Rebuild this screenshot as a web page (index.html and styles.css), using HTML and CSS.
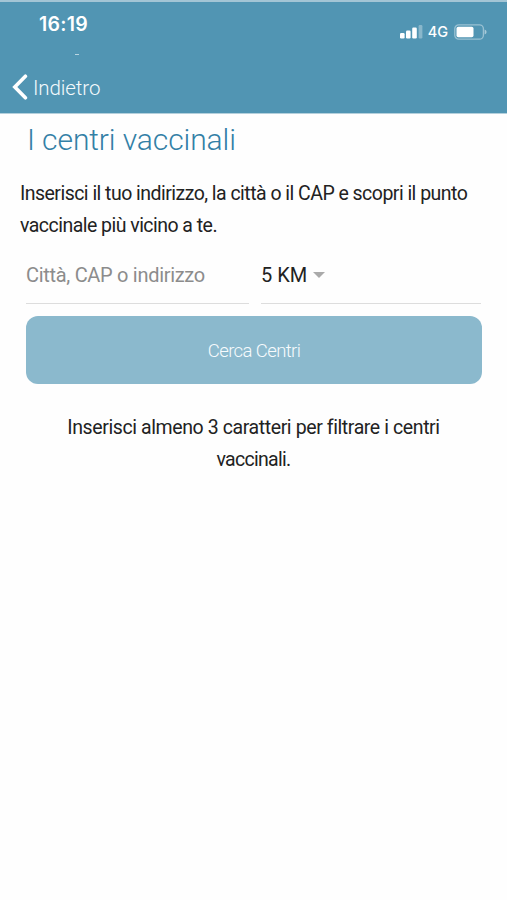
FILE: index.html
```html
<!DOCTYPE html>
<html lang="it">
<head>
<meta charset="utf-8">
<meta name="viewport" content="width=device-width, initial-scale=1">
<title>I centri vaccinali</title>
<link rel="stylesheet" href="styles.css">
</head>
<body>
<header class="header">
  <div class="status">
    <span class="time">16:19</span>
    <div class="indicators">
      <svg class="signal" width="23" height="14" viewBox="0 0 23 14" fill="#fff">
        <rect x="0" y="8" width="4.6" height="5.5" rx="1.2"/>
        <rect x="6" y="5.5" width="4.6" height="8" rx="1.2"/>
        <rect x="12.2" y="2.5" width="4.6" height="11" rx="1.2"/>
        <rect x="18.6" y="0" width="3.8" height="13.5" rx="1.2" opacity=".32"/>
      </svg>
      <span class="network">4G</span>
      <svg class="battery" width="33" height="16" viewBox="0 0 33 16">
        <rect x=".8" y=".8" width="28.6" height="14.4" rx="4" fill="none" stroke="#fff" stroke-opacity=".42" stroke-width="1.3"/>
        <rect x="2.5" y="2.8" width="17" height="10.4" rx="1.8" fill="#fff"/>
        <path d="M30.6 5.5q2 .8 2 2.5t-2 2.5z" fill="#fff" opacity=".5"/>
      </svg>
    </div>
  </div>
  <div class="mark"></div>
  <a class="back">
    <svg width="16" height="26" viewBox="0 0 16 26" fill="none" stroke="#fff" stroke-width="3.6" stroke-linecap="round"><path d="M13.4 2.200 2.800 13l10.600 10.800"/></svg>
    <span class="back-label">Indietro</span>
  </a>
</header>
<main class="content">
  <h1 class="title">I centri vaccinali</h1>
  <p class="intro">Inserisci il tuo indirizzo, la città o il CAP e scopri il punto<br>vaccinale più vicino a te.</p>
  <form class="search">
    <div class="fields">
      <div class="field placeholder">Città, CAP o indirizzo</div>
      <div class="field">5 KM<svg class="caret" width="12" height="6" viewBox="0 0 12 6"><path d="M0 0h12L6 6z" fill="#aaa"/></svg></div>
    </div>
    <button class="submit" type="button">Cerca Centri</button>
  </form>
  <p class="hint">Inserisci almeno 3 caratteri per filtrare i centri<br><span class="hint-end">vaccinali.</span></p>
</main>
</body>
</html>
```
FILE: styles.css
```css
* { box-sizing: border-box; }
body {
  margin: 0;
  min-height: 900px;
  background: #fefefe;
  color: #222;
  font: 19.5px/32px Roboto, "Liberation Sans", sans-serif;
}
.header {
  height: 114px;
  background: #5195b3;
  border-top: 2px solid #a3c5d5;
  border-bottom: 1px solid #b4d0dc;
  color: #fff;
}
.status {
  display: flex;
  justify-content: space-between;
  height: 51px;
  padding: 8px 20px 0 39px;
}
.time { font: 600 19.5px/28px Inter, sans-serif; letter-spacing: .25px; }
.indicators { display: flex; height: 43px; align-items: center; }
.network { margin: 0 6px 0 5px; font: 500 14.5px/20px Inter, sans-serif; }
.mark { width: 4px; height: 1px; margin: 1px 0 0 75px; background: #b9d5e1; }
.back { display: flex; align-items: center; height: 30px; margin: 17px 0 0 12px; }
.back svg { margin-top: -1px; }
.back-label { margin: 2px 0 0 5px; font-size: 20.5px; font-weight: 300; letter-spacing: -.1px; color: #f4fafc; }
.content { padding: 0 20px; }
.title {
  margin: 5px 0 0 7px;
  font-size: 30px;
  line-height: 42px;
  font-weight: 350;
  letter-spacing: -.1px;
  color: #3380a6;
}
.intro { margin: 17px 0 0; letter-spacing: -.53px; white-space: nowrap; }
.search { margin: 16px 5px 0 6px; }
.fields { display: grid; grid-template-columns: 223px 220px; gap: 12px; }
.field {
  display: flex;
  align-items: center;
  height: 46px;
  padding-bottom: 11px;
  border-bottom: 1px solid #ddd;
  white-space: nowrap;
  font-size: 20px;
}
.placeholder { color: #8c8c8c; letter-spacing: -.3px; }
.caret { margin-left: 6px; }
.submit {
  display: block;
  width: 100%;
  height: 68px;
  margin-top: 12px;
  padding: 2px 0 0;
  border: 0;
  border-radius: 12px;
  background: #8bb9cd;
  color: #f7fbfd;
  font: 300 18.5px/32px Roboto, sans-serif;
  letter-spacing: -.6px;
}
.hint { margin: 28px 0 0; text-align: center; letter-spacing: -.4px; white-space: nowrap; }
.hint-end { letter-spacing: -.7px; }
```
